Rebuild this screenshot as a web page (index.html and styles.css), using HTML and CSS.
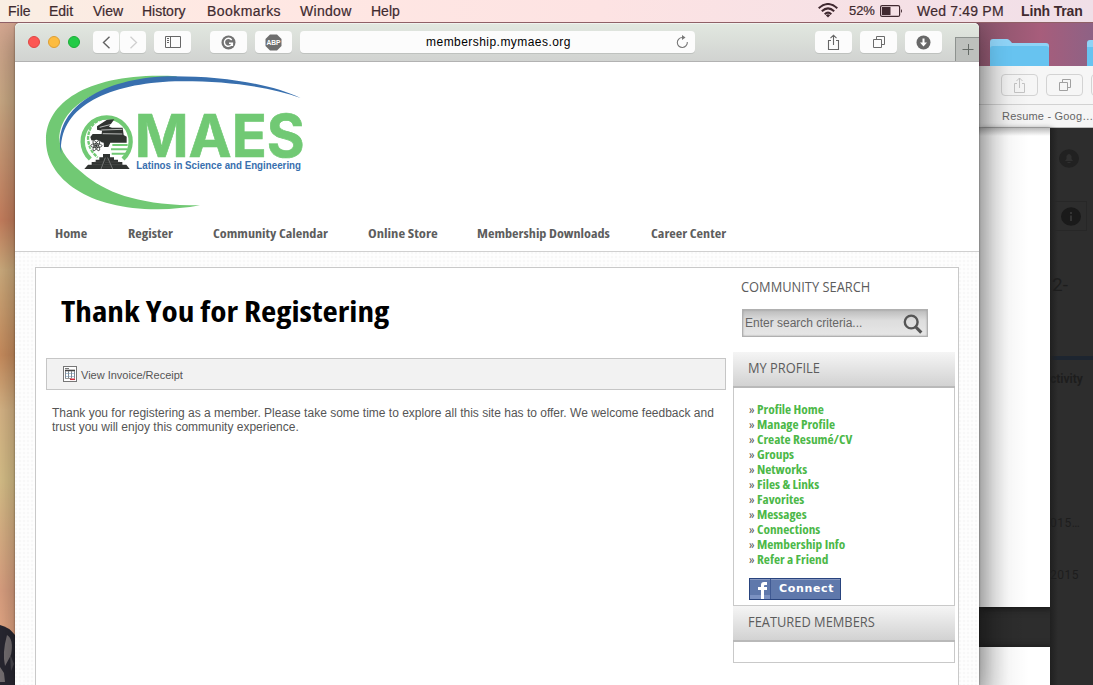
FILE: index.html
```html
<!DOCTYPE html>
<html lang="en">
<head>
<meta charset="utf-8">
<title>Thank You for Registering</title>
<link rel="stylesheet" href="styles.css">
</head>
<body>
<div class="desktop">
  <header class="menubar">
    <nav class="menus"><span class="m-file">File</span><span class="m-edit">Edit</span><span class="m-view">View</span><span class="m-history">History</span><span class="m-bookmarks">Bookmarks</span><span class="m-window">Window</span><span>Help</span></nav>
    <div class="status">
      <svg class="wifi" width="20" height="15" viewBox="0 0 20 15"><g fill="none" stroke="#402930" stroke-width="2"><path d="M.7 5.2Q10-3.2 19.3 5.2M3.8 8.2Q10 2.5 16.2 8.2M6.7 11.2Q10 8 13.3 11.2"/></g><path d="M7.8 12.2Q10 10.3 12.2 12.2L10 14.6Z" fill="#402930"/></svg>
      <span class="percent">52%</span>
      <svg class="battery" width="24" height="12" viewBox="0 0 24 12"><rect x=".6" y=".6" width="19" height="10.8" rx="1.5" fill="none" stroke="#402930" stroke-width="1.2"/><path d="M2 2h8.5v8H2zM21 4q2 2 0 4z" fill="#402930"/></svg>
      <span class="clock">Wed 7:49 PM</span>
      <b class="user">Linh Tran</b>
    </div>
  </header>

  <svg class="dog" width="15" height="62" viewBox="0 0 15 62"><path d="M0 2Q9 4 15 12V62H0Z" fill="#292832"/><path d="M7 12Q14 16 11 32L5 43Q2 30 7 12M0 44L4 50 5 59H0" fill="#777174"/><path d="M10 31l4 10-3 7z" fill="#4c4a52"/></svg>
  <svg class="folder" width="60" height="30" viewBox="0 0 60 30"><path d="M0 30V3Q0 0 3 0H17Q19 0 22 4H56Q59 4 59 7V30Z" fill="#8fd3f6"/><path d="M0 30V10Q0 7 3 7H56Q59 7 59 10V30Z" fill="#67c3f0"/></svg>
  <svg class="folder folder-cut" width="6" height="28" viewBox="0 0 6 28"><path d="M0 28V3Q0 0 3 0H6V28Z" fill="#8fd3f6"/><path d="M0 28V7H6V28Z" fill="#67c3f0"/></svg>

  <section class="back-window">
    <div class="back-tools">
      <span class="ghost"><svg width="14" height="17" viewBox="0 0 14 17"><path d="M4 6.5H1.5V15.5H11.5V6.5H9M6.5 11V1M3.5 4L6.5 1 9.5 4" fill="none" stroke="#c4c4c4"/></svg></span>
      <span class="ghost"><svg width="14" height="14" viewBox="0 0 14 14"><path d="M1.5 4.5H9.5V12.5H1.5ZM4.5 4V1.5H12.5V9.5H10" fill="none" stroke="#a0a0a0"/></svg></span>
      <span class="ghost"></span>
    </div>
    <div class="back-tab">Resume - Goog…</div>
    <div class="back-body">
      <div class="paper paper-top"></div>
      <div class="paper paper-next"></div>
      <div class="dim">
        <svg class="bell" width="20" height="19" viewBox="0 0 20 19"><ellipse cx="10" cy="9.5" rx="10" ry="9.3" fill="#212121"/><path d="M6 12L7.5 10V7Q10 3 12.5 7V10L14 12ZM8.5 13h3v1h-3z" fill="#303030"/></svg>
        <div class="info"><svg width="20" height="19" viewBox="0 0 20 19"><ellipse cx="10" cy="9.5" rx="10" ry="9.3" fill="#1a1a1a"/><path d="M9 5h2v2H9zM9 8.5h2V14H9z" fill="#343434"/></svg></div>
        <div class="dim-title">2-</div>
        <div class="dim-activity">ctivity</div>
        <div class="dim-date">015…</div>
        <div class="dim-date dim-last">2015</div>
      </div>
    </div>
  </section>

  <main class="window">
    <div class="toolbar">
      <div class="lights"><i class="red"></i><i class="amber"></i><i class="green"></i></div>
      <span class="btn back"><svg width="9" height="13" viewBox="0 0 9 13"><path d="M7.5 .8L1.5 6.5L7.5 12.2" fill="none" stroke="#626262" stroke-width="1.4"/></svg></span>
      <span class="btn fwd"><svg width="9" height="13" viewBox="0 0 9 13"><path d="M1.5 .8L7.5 6.5L1.5 12.2" fill="none" stroke="#cfcfcf" stroke-width="1.3"/></svg></span>
      <span class="btn side"><svg width="16" height="12" viewBox="0 0 16 12"><path d="M.5 .5H15.5V11.5H.5ZM5.5 .5V11.5M2 2.5H4M2 4.5H4M2 6.5H4" fill="none" stroke="#676767"/></svg></span>
      <span class="btn gram"><svg width="15" height="15" viewBox="0 0 15 15"><circle cx="7.5" cy="7.5" r="7" fill="#727272"/><path d="M10.7 5A4 4 0 1 0 11.3 8.3H8M11.4 8V11" fill="none" stroke="#fff" stroke-width="1.4"/></svg></span>
      <span class="btn abp"><svg width="17" height="17" viewBox="0 0 17 17"><path d="M5 .5H12L16.5 5V12L12 16.5H5L.5 12V5Z" fill="#6e6e6e"/><text x="1.5" y="11.4" class="abp-text" textLength="14" lengthAdjust="spacingAndGlyphs">ABP</text></svg></span>
      <div class="address"><span>membership.mymaes.org</span><svg class="reload" width="13" height="14" viewBox="0 0 13 14"><path d="M7.5 2.5H6.3A5 5 0 1 0 11.3 7" fill="none" stroke="#777" stroke-width="1.1"/><path d="M6 0V5L9.5 2.6Z" fill="#777"/></svg></div>
      <span class="btn share"><svg width="13" height="17" viewBox="0 0 13 17"><path d="M4 6.5H1.5V15.5H11.5V6.5H9M6.5 11V1.4M3.5 4.2L6.5 1.2 9.5 4.2" fill="none" stroke="#666" stroke-width="1.1"/></svg></span>
      <span class="btn tabs"><svg width="14" height="14" viewBox="0 0 14 14"><path d="M1.5 4.5H9.5V12.5H1.5ZM4.5 4V1.5H12.5V9.5H10" fill="none" stroke="#6b6b6b"/></svg></span>
      <span class="btn down"><svg width="15" height="15" viewBox="0 0 15 15"><circle cx="7.5" cy="7.5" r="7" fill="#686868"/><path d="M6.5 3.5H8.5V7.5H11L7.5 11.5 4 7.5H6.5Z" fill="#fff"/></svg></span>
      <span class="plus"><svg width="12" height="12" viewBox="0 0 12 12"><path d="M.5 5.5H11.5M6.5 0V11" stroke="#656b67"/></svg></span>
    </div>

    <div class="site-head">
      <svg class="logo" width="290" height="155" viewBox="0 0 870 465">
        <path d="M440 34C190 20 48 105 48 225C48 345 180 434 385 433Q450 432 510 421C340 421 242 389 171 335C115 292 90 260 88 220C92 115 225 45 440 41Z" fill="#71c974"/>
        <path d="M94 268C62 135 215 35 430 34C585 34 725 58 812 99C716 64 585 47 435 49C230 56 82 128 94 268Z" fill="#386fae"/>
        <path d="M181 282A72 72 0 1 1 279 282" fill="none" stroke="#71c974" stroke-width="13"/>
        <path d="M230 160Q178 165 174 220Q177 257 203 277" fill="none" stroke="#71c974" stroke-width="7" stroke-dasharray="11 3"/>
        <path d="M201 184L231 164 253 163 237 185 246 188H278L281 210 290 215V233H241L235 246H222L221 233 184 226 181 216 188 207H215L216 197 201 194Z" fill="#303331"/>
        <path d="M209 187L244 178M214 195L277 193M218 206L277 207" stroke="#fff" stroke-width="2" fill="none"/>
        <circle cx="199" cy="242" r="18" fill="#fff"/>
        <g fill="none" stroke="#343735" stroke-width="2.5"><ellipse cx="199" cy="242" rx="17" ry="6"/><ellipse cx="199" cy="242" rx="17" ry="6" transform="rotate(60 199 242)"/><ellipse cx="199" cy="242" rx="17" ry="6" transform="rotate(120 199 242)"/></g><circle cx="199" cy="242" r="4" fill="#343735"/>
        <path d="M247 240H293M243 253H292M245 266H290" stroke="#71c974" stroke-width="6"/>
        <path d="M219 267H240V277H252V284H264V291H277V299H289L299 312H163L174 299H185V291H197V284H208V277H219Z" fill="#303331"/>
        <path d="M226 278L213 312M233 278L248 312" stroke="#999" stroke-width="2"/>
        <path d="M192 291H221M188 299H217M240 291H270M243 299H278M227 285H235M225 292H238M222 299H241M219 306H244" stroke="#666" stroke-width="1"/>
        <text class="logo-name" x="314" y="275" textLength="510" lengthAdjust="spacingAndGlyphs">MAES</text>
        <text class="logo-tag" x="319" y="311" textLength="494" lengthAdjust="spacingAndGlyphs">Latinos in Science and Engineering</text>
      </svg>
      <nav class="site-nav"><a class="n1">Home</a><a class="n2">Register</a><a class="n3">Community Calendar</a><a class="n4">Online Store</a><a class="n5">Membership Downloads</a><a class="n6">Career Center</a></nav>
    </div>

    <div class="site-body">
      <div class="sheet">
        <article class="content">
          <h1>Thank You for Registering</h1>
          <div class="invoice"><svg width="14" height="16" viewBox="0 0 14 16"><rect x=".5" y=".5" width="13" height="15" fill="#fff" stroke="#777"/><path d="M2 2.5H6" stroke="#777"/><path d="M3 7.5H11M3 10.5H11" stroke="#a9c9e0"/><path d="M2 4.5H12" stroke="#444" stroke-width="1.6"/><path d="M2.5 5V12.5M5.5 5V12.5M8.5 5V12.5M11.5 5V12.5" stroke="#808890"/><path d="M2 12.5H8" stroke="#999"/><path d="M7 13.3H12" stroke="#d02b3c" stroke-width="1.5"/></svg><span>View Invoice/Receipt</span></div>
          <p>Thank you for registering as a member. Please take some time to explore all this site has to offer. We welcome feedback and<br>trust you will enjoy this community experience.</p>
        </article>
        <aside class="sidebar">
          <h2 class="search-title"><span>COMMUNITY SEARCH</span></h2>
          <div class="search"><span>Enter search criteria...</span><svg width="20" height="21" viewBox="0 0 20 21"><circle cx="8.2" cy="9" r="6.4" fill="none" stroke="#555" stroke-width="2.4"/><path d="M12.8 14L18.3 19.6" stroke="#555" stroke-width="3.2"/></svg></div>
          <h2 class="bar"><span>MY PROFILE</span></h2>
          <div class="panel">
            <ul>
              <li>» <a>Profile Home</a></li><li>» <a>Manage Profile</a></li><li>» <a>Create Resumé/CV</a></li><li>» <a>Groups</a></li><li>» <a>Networks</a></li><li>» <a>Files &amp; Links</a></li><li>» <a>Favorites</a></li><li>» <a>Messages</a></li><li>» <a>Connections</a></li><li>» <a>Membership Info</a></li><li>» <a>Refer a Friend</a></li>
            </ul>
            <div class="connect"><span class="fb"><svg width="20" height="20" viewBox="0 0 20 20"><path d="M0 16H20V20H0Z" fill="#7b91c1"/><path d="M11 20V11H8V8H11V6Q11 3 14 3H17V6H15Q14 6 14 7V8H17V11H14V20Z" fill="#fff"/></svg></span><b>Connect</b></div>
          </div>
          <h2 class="bar"><span>FEATURED MEMBERS</span></h2>
          <div class="panel empty"></div>
        </aside>
      </div>
    </div>
  </main>
</div>
</body>
</html>
```
FILE: styles.css
```css
* { box-sizing: border-box; }
body { margin: 0; font-family: "Liberation Sans", Arial, sans-serif; overflow: hidden; }
svg { display: block; flex: none; }
.desktop { position: relative; width: 1093px; height: 685px; overflow: hidden; background: linear-gradient(90deg, transparent 900px, #88546b 979px, #a75d7b 1040px, #8e6285 1093px), linear-gradient(#d6a892 22px, #cfae88 100px, #cb8260 220px, #d2b080 270px, #cd9060 355px, #dcb989 410px, #dcc48b 480px, #e0a484 590px, #e8aa87 625px, #e8aa87); }

/* System menu bar */
.menubar { position: relative; z-index: 1; height: 23px; display: flex; align-items: flex-start; justify-content: space-between; padding: 0 10px 0 8px; background: linear-gradient(90deg, #f9eee3, #ffe8e3 20%, #fde3e3 55%, #f0dfe8); border-bottom: 1px solid #8f6066; color: #402a2f; font-size: 14px; line-height: 22px; -webkit-text-stroke: .2px currentColor; }
.menus { display: flex; }
.m-file { width: 41px; } .m-edit { width: 44px; } .m-view { width: 49px; } .m-history { width: 65px; } .m-bookmarks { width: 93px; letter-spacing: .45px; } .m-window { width: 71px; letter-spacing: .3px; }
.status { display: flex; white-space: nowrap; }
.wifi { margin: 3px 11px 0 0; }
.percent { width: 31px; font-size: 13px; letter-spacing: -.1px; }
.battery { margin: 5px 13px 0 0; }
.clock { width: 104px; letter-spacing: .2px; }
.user { width: 62px; letter-spacing: -.15px; -webkit-text-stroke: 0; }

/* Desktop items */
.dog { position: absolute; left: 0; top: 623px; }
.folder { position: absolute; left: 990px; top: 39px; }
.folder-cut { left: 1087px; top: 40px; }

/* Background window */
.back-window { position: absolute; left: 979px; top: 66px; width: 114px; height: 619px; overflow: hidden; background: #2d2d2d; }
.back-window::after { content: ""; position: absolute; left: 0; top: 0; width: 50px; height: 619px; background: linear-gradient(90deg, #0003, #0000001a 15px, #00000008 30px, transparent); }
.back-tools { height: 39px; display: flex; align-items: center; gap: 8px; padding-left: 22px; background: #f6f6f6; border-bottom: 1px solid #d2d2d2; }
.ghost { width: 37px; height: 22px; flex: none; display: flex; align-items: center; justify-content: center; border: 1px solid #d3d3d3; border-radius: 4px; }
.back-tab { height: 23px; padding-left: 23px; font-size: 11px; line-height: 23px; letter-spacing: .2px; color: #656565; background: #f5f5f5; white-space: nowrap; border-bottom: 1px solid #bbb; }
.back-body { position: relative; height: 557px; }
.paper { width: 71px; background: #fff; }
.paper-top { height: 479px; box-shadow: 2px 2px 6px #171717; background: linear-gradient(#bbb, #fff 8px); }
.paper-next { height: 40px; margin-top: 40px; box-shadow: 2px 0 6px #171717; }
.dim { position: absolute; left: 71px; top: 0; width: 43px; height: 557px; overflow: hidden; color: #1d1d1d; background: linear-gradient(90deg, #202020, transparent 8px), linear-gradient(transparent 228px, #1d2530 228px, #1d2530 232px, transparent 232px), #2d2d2d; display: flex; flex-direction: column; }
.bell { margin: 21px 0 0 9px; }
.info { width: 33px; height: 30px; margin: 33px 0 0 4px; padding: 5px 0 0 6px; border: 1px solid #272727; }
.dim-title { margin-top: 42px; padding-left: 2px; font-size: 19px; line-height: 24px; font-family: Roboto, sans-serif; }
.dim-activity { margin-top: 75px; font: bold 12px/14px Roboto, sans-serif; height: 14px; }
.dim-date { margin-top: 130px; font: 12px/14px Roboto, sans-serif; letter-spacing: .5px; }
.dim-last { margin-top: 38px; }

/* Browser window */
.window { position: absolute; left: 15px; top: 23px; width: 964px; height: 662px; border-radius: 5px 5px 0 0; background: #fff; box-shadow: 0 0 2px #0008, 0 8px 30px #0006; display: flex; flex-direction: column; }
.toolbar { height: 39px; flex: none; display: flex; align-items: flex-start; padding: 8px 0 0 13px; border-radius: 5px 5px 0 0; background: linear-gradient(#e2e8e0, #d1d3d1); border-bottom: 1px solid #b2b2b2; box-shadow: inset 0 1px #f0f3ef; }
.lights { display: flex; gap: 8px; padding-top: 5px; margin-right: 13px; }
.lights i { width: 12px; height: 12px; border-radius: 50%; }
.red { background: #fc5753; border: 1px solid #df4744; } .amber { background: #fdbc40; border: 1px solid #de9f34; } .green { background: #23cb47; border: 1px solid #1cad38; }
.btn { width: 37px; height: 22px; flex: none; display: flex; align-items: center; justify-content: center; border-radius: 4px; background: #fcfcfc; box-shadow: 0 1px #bfc2bf; }
.back { width: 26px; } .fwd { width: 26px; margin-left: 1px; }
.side { margin-left: 8px; } .gram { margin-left: 19px; } .abp { margin-left: 8px; }
.abp-text { font: bold 8px "Liberation Sans", sans-serif; fill: #fff; }
.address { position: relative; width: 395px; height: 22px; margin-left: 8px; border-radius: 4px; background: #fcfcfc; box-shadow: 0 1px #bfc2bf; font-size: 12px; line-height: 23px; text-align: center; color: #000; }
.address span { letter-spacing: .45px; padding-left: 2px; }
.reload { position: absolute; right: 6px; top: 4px; }
.share { margin-left: 120px; } .tabs, .down { margin-left: 8px; }
.plus { width: 24px; height: 24px; margin: 6px 0 0 13px; border: solid #8d928f; border-width: 1px 0 0 1px; background: #bdc0bd; display: flex; align-items: center; justify-content: center; }

/* Site header */
.site-head { height: 190px; flex: none; border-bottom: 1px solid #d0d0d0; padding: 3px 0 0 15px; }
.site-nav { display: flex; gap: 40px; padding: 4px 0 0 25px; font: bold 13px/18px "Open Sans", "Noto Sans", sans-serif; font-stretch: 75%; color: #5d5d5d; white-space: nowrap; }
.site-nav a { flex: none; transform: scaleX(1.09); transform-origin: 0 50%; }
.n1 { width: 33px; } .n2 { width: 45px; } .n3 { width: 115px; } .n4 { width: 69px; } .n5 { width: 134px; } .n6 { width: 76px; }
.site-nav .n4 { transform: scaleX(1.125); }
.logo-name { font: 700 178px Inter, sans-serif; fill: #71c974; stroke: #71c974; stroke-width: 2px; }
.logo-tag { font: bold 30px "Liberation Sans", sans-serif; fill: #386fae; }

/* Page content */
.site-body { flex: 1; padding: 15px 20px 0; background: repeating-linear-gradient(90deg, #fff0 0 2px, #fffb 2px 4px), repeating-linear-gradient(#f8f8f8 0 2px, #fdfdfd 2px 4px); }
.sheet { height: 418px; width: 924px; display: flex; border: 1px solid #c9c9c9; border-bottom: 0; background: #fff; }
.content { width: 690px; padding: 23px 0 0 10px; flex: none; }
h1 { width: 500px; margin: 0 0 0 15px; font: bold 29px/40px "Open Sans", "Noto Sans", sans-serif; font-stretch: 75%; color: #000; white-space: nowrap; transform: scaleX(1.147); transform-origin: 0 50%; }
.invoice { width: 680px; height: 32px; margin-top: 27px; padding-left: 16px; display: flex; align-items: center; gap: 4px; border: 1px solid #c6c6c6; background: #f2f2f2; color: #555; font-size: 11px; }
.invoice span { padding-top: 2px; }
.content p { margin: 16px 0 0 6px; font-size: 12px; line-height: 14px; color: #555; white-space: nowrap; }
.sidebar { width: 222px; margin-left: 7px; padding-top: 8px; }
h2 { margin: 0; font: 14px/22px "Open Sans", "Noto Sans", sans-serif; color: #5c5c5c; white-space: nowrap; }
h2 span { display: block; transform: scaleX(.918); transform-origin: 0 50%; }
.search-title { padding-left: 8px; }
.search { width: 186px; height: 28px; margin: 11px 0 15px 9px; padding: 0 4px 0 2px; display: flex; justify-content: space-between; align-items: center; border: 1px solid #b0b0b0; background: linear-gradient(#bbb, #ddd 40%, #e7e7e7); box-shadow: inset 0 0 2px #999; font-size: 12px; color: #666; }
.bar { height: 36px; padding-left: 15px; line-height: 32px; background: linear-gradient(#f5f5f5, #d2d2d2); border-bottom: 2px solid #b9b9b9; }
.panel { height: 218px; padding: 14px 0 0 15px; border: 1px solid #c9c9c9; border-top: 0; }
ul { list-style: none; margin: 0; padding: 0; font: 12px/15px "Open Sans", "Noto Sans", sans-serif; font-stretch: 75%; color: #555; }
li { display: flex; gap: 3px; height: 15px; }
li a { font-weight: bold; color: #4cb848; white-space: nowrap; transform: scaleX(1.11); transform-origin: 0 50%; }
.connect { width: 92px; height: 22px; margin-top: 11px; display: flex; border: 1px solid #29447e; background: #5f78ab; box-shadow: inset 0 1px #8798c0; color: #fff; }
.fb { width: 21px; border-right: 1px solid #405a93; }
.connect b { padding-left: 8px; font: bold 11px/20px "DejaVu Sans", sans-serif; letter-spacing: .65px; }
.empty { height: 21px; }
```
